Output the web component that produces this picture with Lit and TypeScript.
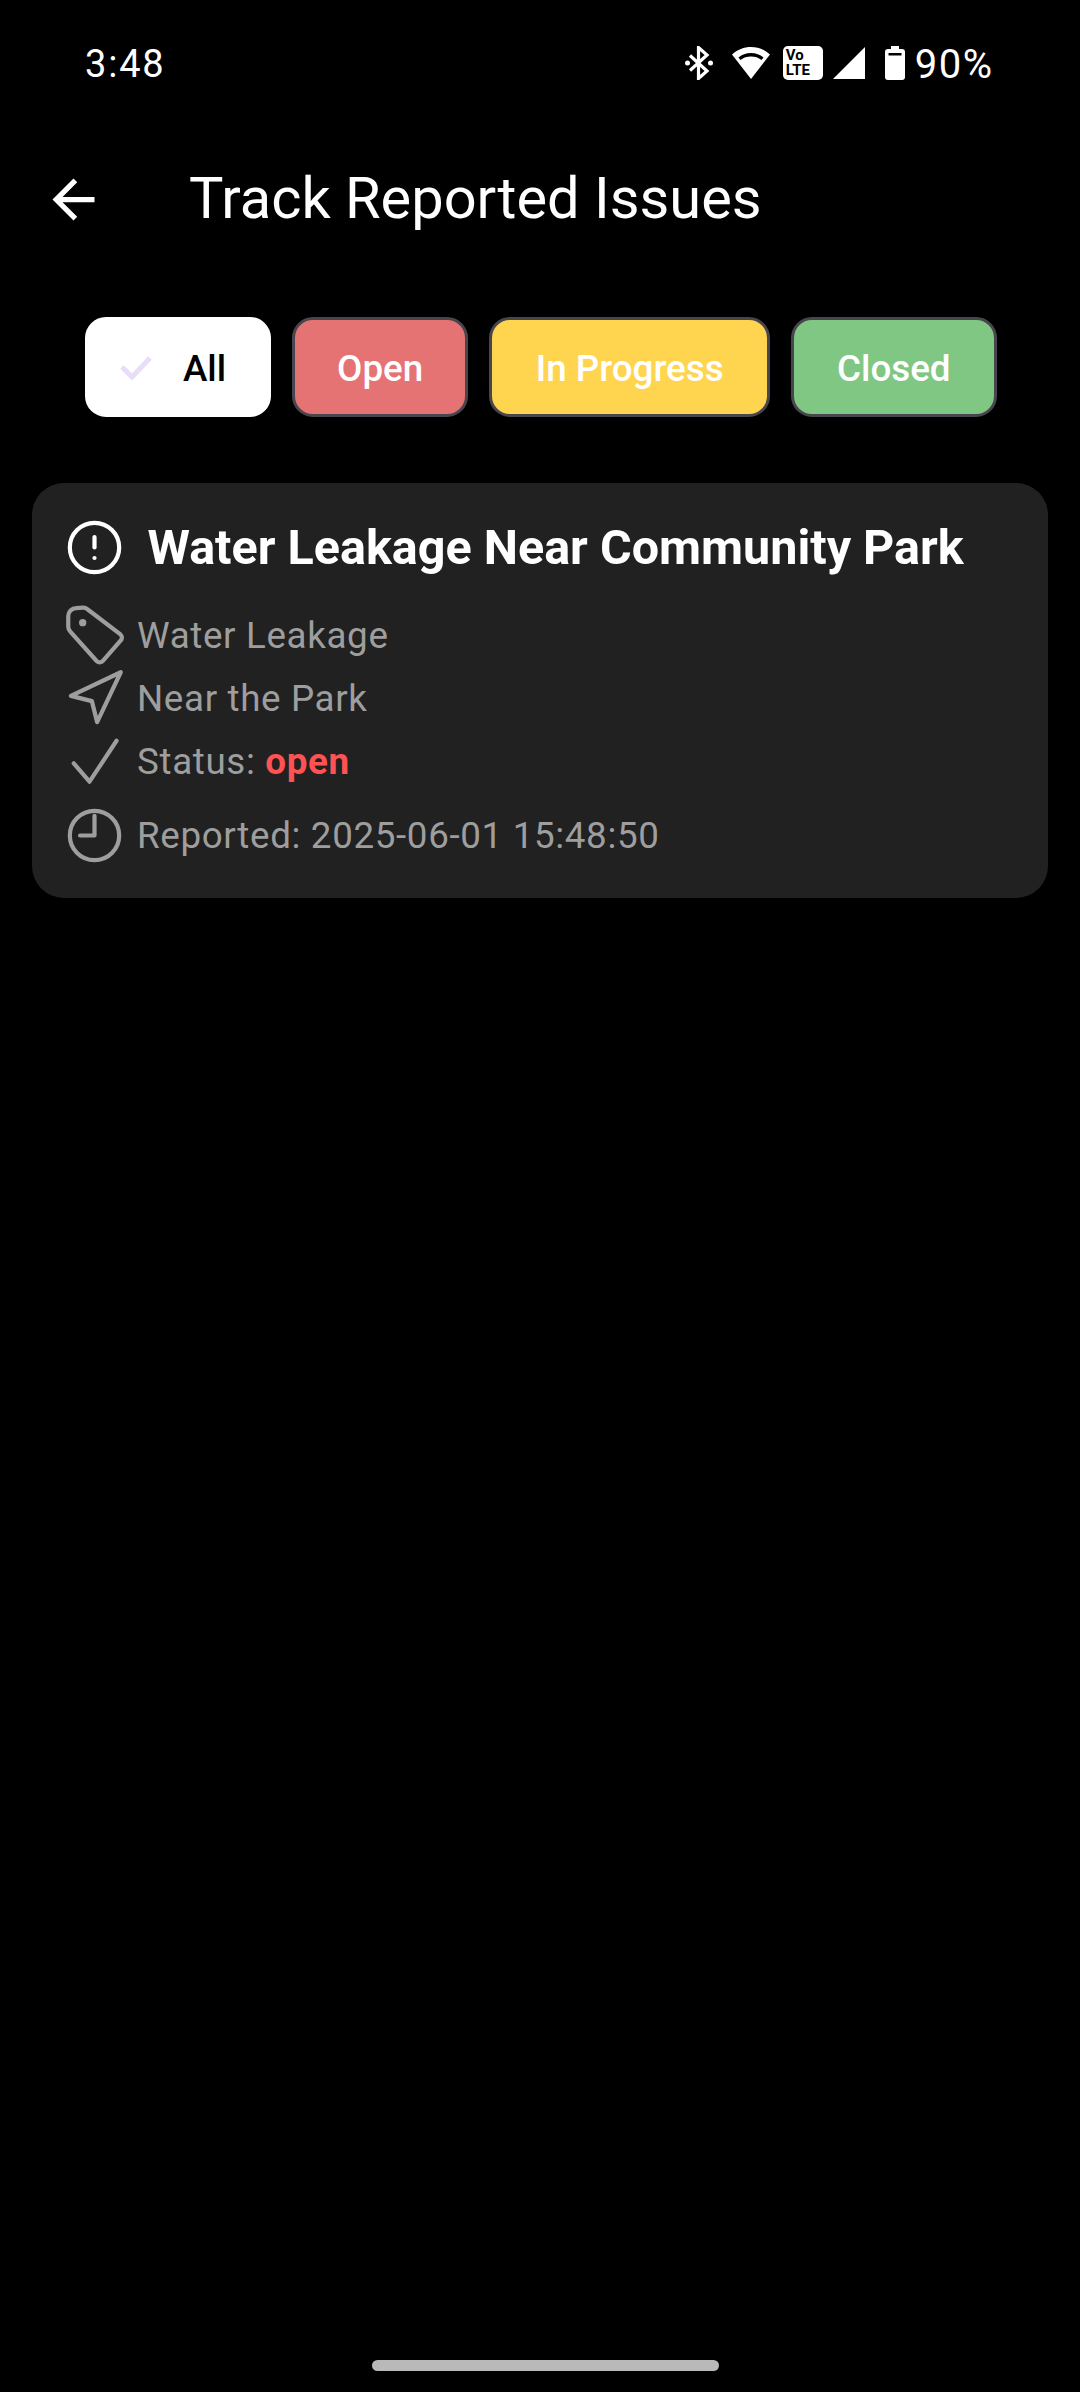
import {LitElement, css, html, svg} from 'lit';
import {customElement} from 'lit/decorators.js';

const chips = [
  {label: 'Open', cls: 'open'},
  {label: 'In Progress', cls: 'progress'},
  {label: 'Closed', cls: 'closed'},
];

const tagIcon = svg`
  <path d="M2.7 10.4A2.4 2.4 0 0 1 2 8.7V4.6A3 3 0 0 1 5 1.6L7.6 1.4A2.4 2.4 0 0 1 9.3 2L21.9 11.6A1.6 1.6 0 0 1 22 13.9L15.2 21.7A1.6 1.6 0 0 1 12.9 21.8Z"/>
  <circle cx="7.5" cy="7.1" r="0.9" fill="currentColor" stroke-width="1"/>`;
const navIcon = svg`<polygon points="3 11 22 2 13 21 11 13 3 11"/>`;
const checkIcon = svg`<polyline points="4.1 12.7 10.1 19.7 20.4 4.1"/>`;
const clockIcon = svg`<circle cx="12" cy="12" r="9.400"/><polyline points="12 4.5 12 12 6.500 12"/>`;

@customElement('app-root')
export class AppRoot extends LitElement {
  static styles = css`
    :host {
      display: flex;
      flex-direction: column;
      min-height: 2392px;
      background: #000;
      color: #fff;
      font-family: Roboto, sans-serif;
    }

    .status {
      display: flex;
      align-items: center;
      height: 126px;
      padding: 0 88px 0 85px;
      box-sizing: border-box;
    }
    .time {
      font-size: 38px;
      font-weight: 450;
      letter-spacing: 1.800px;
      flex: 1;
      padding-top: 2px;
    }
    .status-icons {
      display: flex;
      align-items: center;
      gap: 10px;
    }
    .status-icons svg {
      display: block;
      fill: #fff;
    }
    .bt {
      margin-right: 9px;
      stroke: #fff;
    }
    .wifi {
      margin-right: 3px;
    }
    .volte {
      width: 40px;
      height: 34px;
      box-sizing: border-box;
      padding: 2px 0 0 3px;
      background: #fff;
      border-radius: 5px;
      color: #000;
      font-size: 15px;
      font-weight: 700;
      line-height: 15px;
    }
    .battery {
      margin-left: 10px;
    }
    .percent {
      font-size: 40px;
      letter-spacing: 1.500px;
      margin-right: -1.500px;
      padding-top: 2px;
    }

    .appbar {
      display: flex;
      align-items: center;
      height: 147px;
      padding-left: 42px;
    }
    .appbar svg {
      display: block;
      fill: #fff;
    }
    .appbar h1 {
      margin: 0 0 3px 84px;
      font-size: 57.75px;
      font-weight: 400;
    }

    .chips {
      display: flex;
      gap: 21px;
      margin-top: 44px;
      padding-left: 85px;
    }
    .chip {
      display: flex;
      align-items: center;
      height: 100px;
      padding: 2px 42px 0;
      box-sizing: border-box;
      border: 3px solid #49454f;
      border-radius: 21px;
      font-size: 36.750px;
      font-weight: 500;
    }
    .chip.all {
      gap: 31px;
      padding: 2px 42px 0 32px;
      background: #fff;
      border-color: #fff;
      color: #000;
    }
    .chip.all svg {
      display: block;
      fill: none;
      stroke: #e8def8;
      stroke-width: 5;
    }
    .open { background: #e57373; }
    .chip.progress {
      background: #ffd54f;
      padding: 2px 43.500px 0;
    }
    .chip.closed {
      background: #81c784;
      padding: 2px 43px 0;
    }

    .card {
      margin: 66px 32px 0;
      padding: 33px 32px 31px 30.500px;
      background: #212121;
      border-radius: 32px;
    }
    .card-title {
      display: flex;
      align-items: center;
      gap: 22px;
      margin-bottom: 25px;
    }
    .card-title h2 {
      margin: 0;
      font-size: 48.500px;
      font-weight: 700;
    }
    .icon {
      display: block;
      flex: none;
      width: 63px;
      height: 63px;
      fill: none;
      stroke: currentColor;
      stroke-width: 1.600;
      stroke-linecap: round;
      stroke-linejoin: round;
    }
    .card-title .icon {
      color: #fff;
    }
    .row {
      display: flex;
      align-items: center;
      gap: 11.500px;
      height: 63px;
      color: #9e9e9e;
      font-size: 36.750px;
      letter-spacing: 0.650px;
    }
    .row.reported {
      margin-top: 11px;
    }
    .status-open {
      color: #ff5252;
      font-weight: 700;
    }

    .home {
      align-self: flex-start;
      width: 347px;
      height: 11px;
      margin: auto 0 21px 372px;
      background: #b9b9b9;
      border-radius: 6px;
    }
  `;

  private icon(content: unknown) {
    return html`<svg class="icon" viewBox="0 0 24 24">${content}</svg>`;
  }

  render() {
    return html`
      <div class="status">
        <span class="time">3:48</span>
        <div class="status-icons">
          <svg class="bt" width="28" height="34" viewBox="0 0 28 34" fill="none">
            <path d="M5 9.5 22 25 13.5 32.5V1.500L22 9 5 24.500" fill="none" stroke-width="3.200"/>
            <circle cx="2.500" cy="17" r="2.500" stroke="none" style="fill:#fff"/>
            <circle cx="25.500" cy="17" r="2.500" stroke="none" style="fill:#fff"/>
          </svg>
          <svg class="wifi" width="38" height="32" viewBox="0 0 38 32">
            <path fill-rule="evenodd" d="M19 0C12 0 5.500 2.500 0 7.500L19 32 38 7.500C32.500 2.500 26 0 19 0ZM19 6C14 6 10 7.500 6.500 10.500L8.500 13C11.500 10.500 15 9.500 19 9.500S26.500 10.500 29.500 13L31.500 10.500C28 7.500 24 6 19 6Z"/>
          </svg>
          <div class="volte">Vo<br />LTE</div>
          <svg width="32" height="32" viewBox="0 0 32 32"><path d="M32 0V32H0Z"/></svg>
          <svg class="battery" width="20" height="34" viewBox="0 0 20 34">
            <path fill-rule="evenodd" d="M6 0H14V3H17A3 3 0 0 1 20 6V31A3 3 0 0 1 17 34H3A3 3 0 0 1 0 31V6A3 3 0 0 1 3 3H6ZM3.500 7V9.500H16.500V7Z"/>
          </svg>
          <span class="percent">90%</span>
        </div>
      </div>

      <div class="appbar">
        <svg width="63" height="63" viewBox="0 0 24 24">
          <path d="M20 11H7.830l5.590-5.590L12 4l-8 8 8 8 1.410-1.410L7.830 13H20v-2z"/>
        </svg>
        <h1>Track Reported Issues</h1>
      </div>

      <div class="chips">
        <div class="chip all">
          <svg width="32" height="24" viewBox="0 0 32 24"><path d="M2 11 12 21 30 2"/></svg>
          All
        </div>
        ${chips.map((c) => html`<div class="chip ${c.cls}">${c.label}</div>`)}
      </div>

      <div class="card">
        <div class="card-title">
          <svg class="icon" viewBox="0 0 24 24">
            <circle cx="12" cy="12" r="9.400"/>
            <line x1="12" y1="8" x2="12" y2="12"/>
            <line x1="12" y1="16" x2="12.010" y2="16"/>
          </svg>
          <h2>Water Leakage Near Community Park</h2>
        </div>
        <div class="row">${this.icon(tagIcon)}<span>Water Leakage</span></div>
        <div class="row">${this.icon(navIcon)}<span>Near the Park</span></div>
        <div class="row">${this.icon(checkIcon)}<span>Status: <span class="status-open">open</span></span></div>
        <div class="row reported">${this.icon(clockIcon)}<span>Reported: 2025-06-01 15:48:50</span></div>
      </div>

      <div class="home"></div>
    `;
  }
}
